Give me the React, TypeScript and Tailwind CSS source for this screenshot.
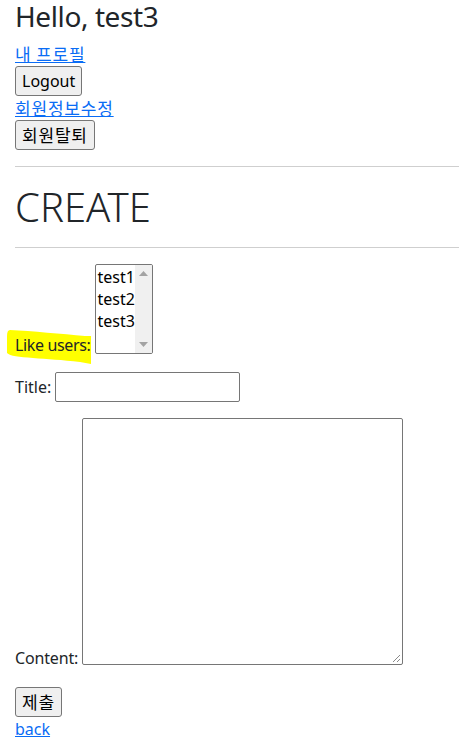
import React from "react";

const font = "font-['Noto_Sans','Noto_Sans_CJK_KR',sans-serif]";
const kr = "font-['Noto_Sans_CJK_KR','Noto_Sans',sans-serif] text-[17px] tracking-[0.8px]";

function Btn({ children, className = "" }: { children: React.ReactNode; className?: string }) {
  return (
    <button
      className={`h-[30px] px-[6px] border border-[#767676] rounded-[3px] bg-[#efefef] text-black text-base leading-6 ${className}`}
    >
      {children}
    </button>
  );
}

export default function App() {
  return (
    <div className={`pl-[15px] text-[#212529] text-base leading-6 bg-white min-h-[756px] ${font}`}>
      <h3 className="text-[28px] leading-[33.6px] font-normal tracking-[-0.4px] mb-2">Hello, test3</h3>
      <div className="h-6 leading-6">
        <a href="#" className={`text-[#0a6cf5] underline ${kr}`}>내 프로필</a>
      </div>
      <div className="flex">
        <Btn>Logout</Btn>
      </div>
      <div className="h-6 leading-6">
        <a href="#" className={`text-[#0a6cf5] underline ${kr}`}>회원정보수정</a>
      </div>
      <div className="flex">
        <Btn className={`${kr} px-[5px]`}>회원탈퇴</Btn>
      </div>
      <div className="mt-4 border-t border-[#cfcfcf]" />
      <h1 className="mt-4 text-[40px] leading-[48px] font-light">CREATE</h1>
      <div className="mt-4 border-t border-[#cfcfcf]" />

      <div className="mt-4 flex items-end">
        <div className="relative mb-[-3px]">
          <svg className="absolute left-[-8px] top-[-5px]" width="86" height="38" viewBox="0 0 86 38">
            <path
              d="M3 2 C 25 3, 55 6, 78 8 L 84 8 L 84 36 L 73 34 C 55 32, 40 31, 26 30 C 12 29, 3 28, 0 25 L 0 8 C 0 4, 1 2, 3 2 Z"
              fill="#ffff00"
            />
          </svg>
          <span className="relative tracking-[-0.35px]">Like users:</span>
        </div>
        <div className="ml-[4px] w-[58px] h-[90px] border border-[#767676] rounded-[2px] flex overflow-hidden bg-white">
          <div className="flex-1 pl-[2px] pt-[1px] text-black leading-[22px]">
            <div>test1</div>
            <div>test2</div>
            <div>test3</div>
          </div>
          <div className="w-[17px] bg-[#f0f0f0] flex flex-col items-center justify-between py-[6px]">
            <svg width="9" height="5" viewBox="0 0 9 5"><path d="M0 5 L4.5 0 L9 5 Z" fill="#a3a3a3" /></svg>
            <svg width="9" height="5" viewBox="0 0 9 5"><path d="M0 0 L4.5 5 L9 0 Z" fill="#a3a3a3" /></svg>
          </div>
        </div>
      </div>

      <div className="mt-[18px] flex items-center">
        <span>Title:</span>
        <div className="ml-[4px] w-[185px] h-[30px] border border-[#767676] rounded-[2px] bg-white" />
      </div>

      <div className="mt-4 flex items-end">
        <span className="mb-[-5px] tracking-[-0.15px]">Content:</span>
        <div className="relative ml-[4px] w-[321px] h-[247px] border border-[#767676] rounded-[2px] bg-white">
          <svg className="absolute right-[1px] bottom-[1px]" width="9" height="9" viewBox="0 0 9 9">
            <path d="M8 1 L1 8 M8 5 L5 8" stroke="#8a8a8a" strokeWidth="1" />
          </svg>
        </div>
      </div>

      <div className="mt-[22px] flex">
        <Btn className={`${kr} px-[5px]`}>제출</Btn>
      </div>
      <div className="h-6">
        <a href="#" className="text-[#0a6cf5] underline">back</a>
      </div>
    </div>
  );
}
